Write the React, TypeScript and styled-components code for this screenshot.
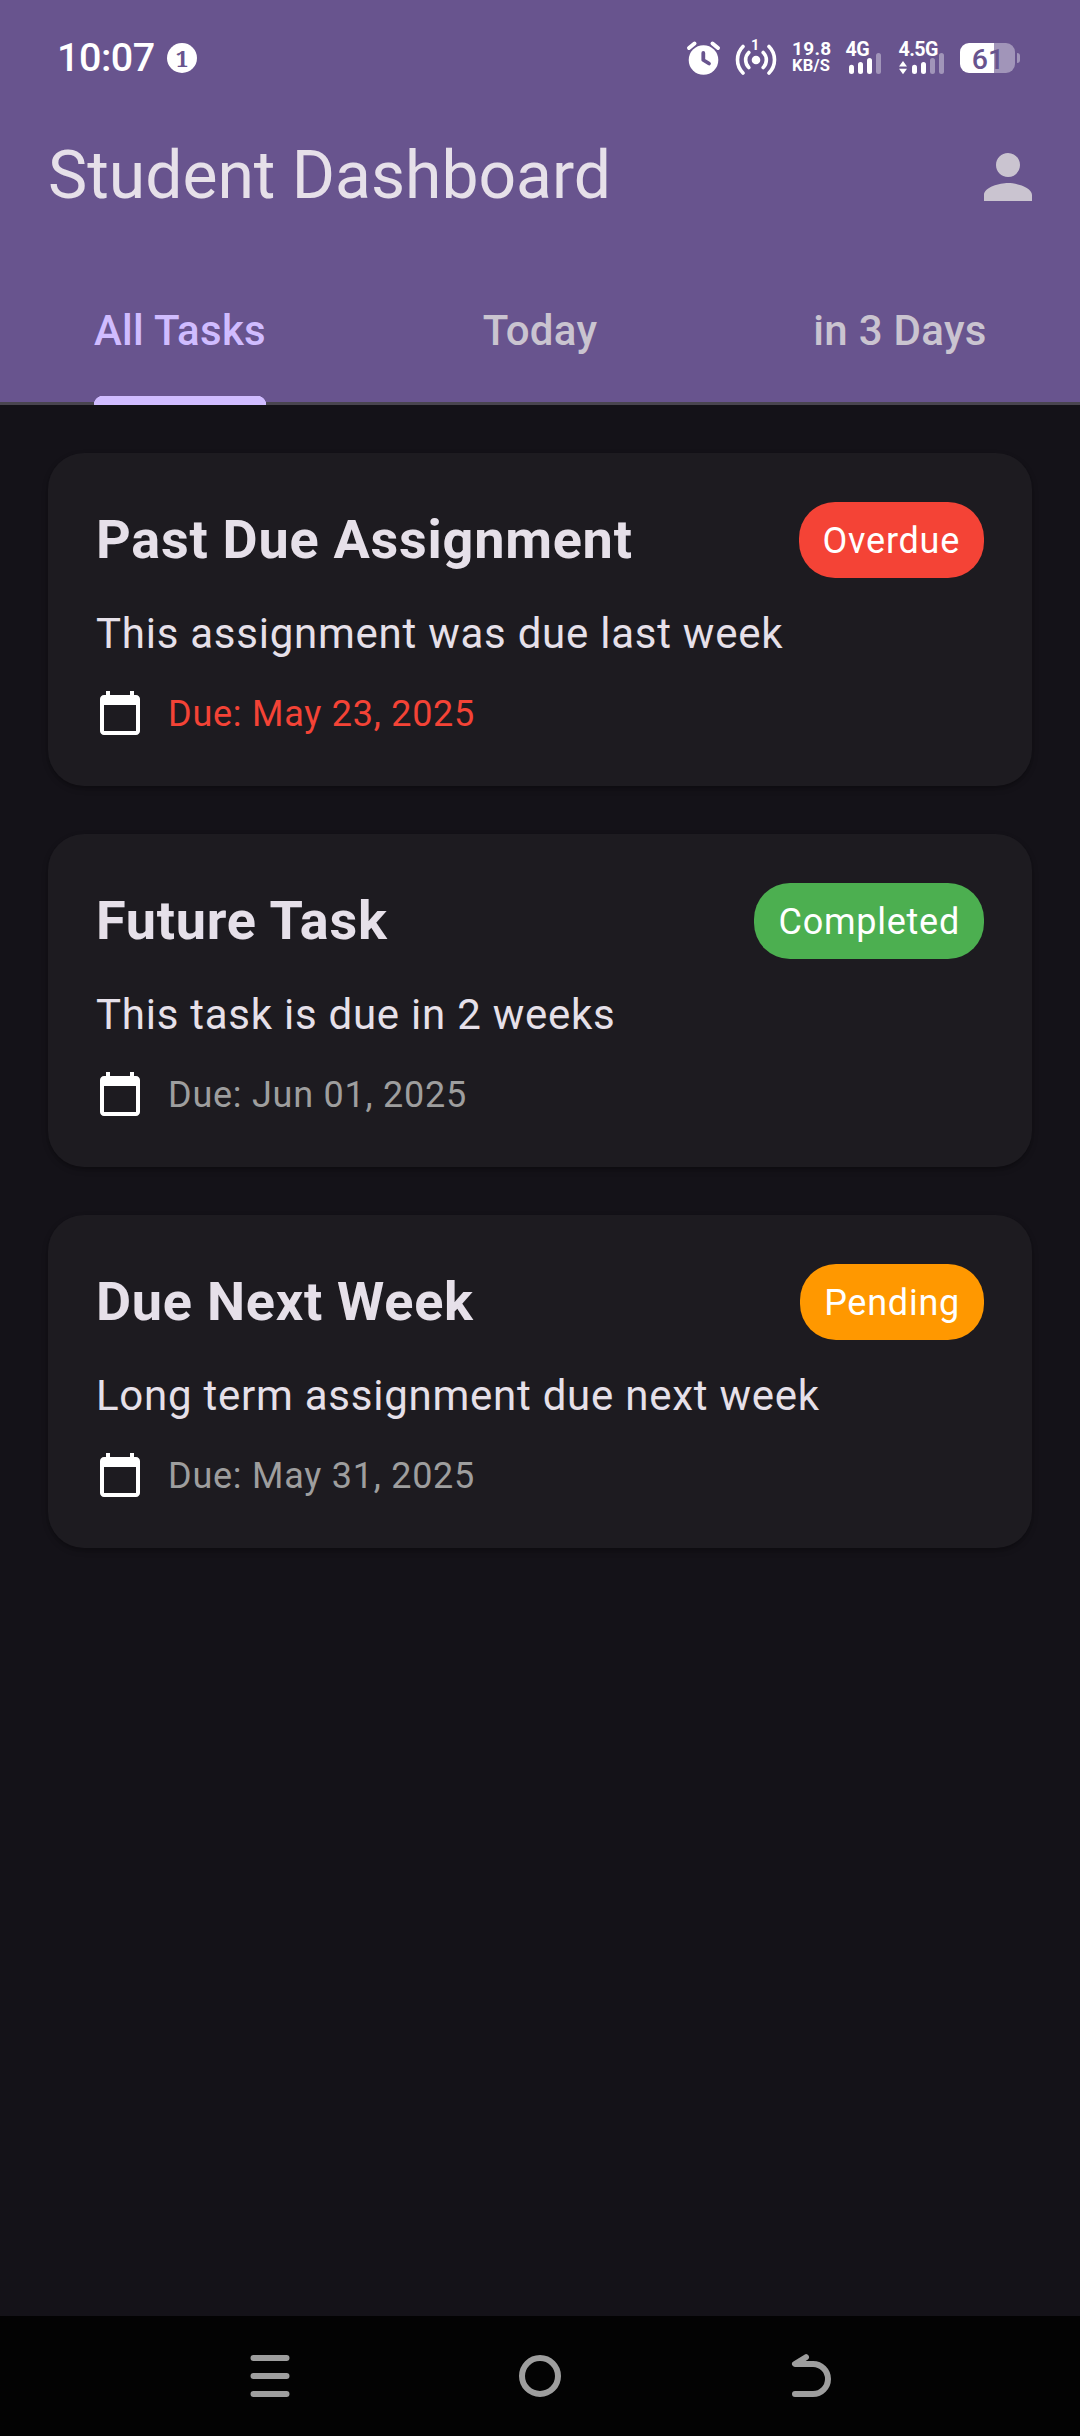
import React from "react";
import styled, { createGlobalStyle } from "styled-components";

const GlobalStyle = createGlobalStyle`
  * { box-sizing: border-box; }
  body { margin: 0; background: #141218; font-family: Roboto, "Noto Sans", sans-serif; }
`;

const Screen = styled.div`
  width: 1080px;
  height: 2436px;
  display: flex;
  flex-direction: column;
  background: #141218;
  color: #e6e0e9;
`;

const Header = styled.header`
  display: flex;
  flex-direction: column;
  height: 405px;
  background: #68548e;
`;

const StatusBar = styled.div`
  display: flex;
  align-items: flex-start;
  height: 93px;
  padding: 38px 60px 0 57px;
  color: #fff;
`;

const Clock = styled.span`
  font-size: 39.5px;
  font-weight: 500;
  letter-spacing: -0.5px;
  line-height: 40px;
  width: 110px;
`;

const NoticeCount = styled.span`
  width: 30px;
  height: 30px;
  margin-top: 5px;
  border-radius: 50%;
  background: #fff;
  color: #68548e;
  font: bold 22.5px/31px "Noto Serif", "Liberation Serif", serif;
  text-align: center;
`;

const StatusIcons = styled.div`
  display: flex;
  margin-left: auto;
  height: 38px;
`;

const StatusIcon = styled.svg<{ $gap?: number }>`
  display: block;
  flex: none;
  overflow: visible;
  margin-left: ${(p) => p.$gap ?? 0}px;
`;

const NetSpeed = styled.div`
  display: flex;
  flex-direction: column;
  width: 40px;
  margin-left: 14px;
  padding-top: 3px;
  font-weight: 700;
  white-space: nowrap;
`;

const SpeedValue = styled.span`
  font-size: 19px;
  letter-spacing: 0.3px;
  line-height: 16px;
`;

const SpeedUnit = styled.span`
  font-size: 16.5px;
  letter-spacing: 0.2px;
  line-height: 17px;
`;

const Toolbar = styled.div`
  display: flex;
  align-items: center;
  justify-content: space-between;
  height: 168px;
  padding: 0 36px 0 48px;
`;

const Title = styled.h1`
  margin: -3px 0 0;
  font-size: 66px;
  font-weight: 400;
  line-height: 84px;
`;

const IconButton = styled.button`
  display: flex;
  padding: 0;
  border: 0;
  background: none;
  color: #cac4d0;
`;

const Tabs = styled.nav`
  display: grid;
  grid-template-columns: repeat(3, 1fr);
  height: 144px;
  background: linear-gradient(to top, #49454f 3px, transparent 3px);
`;

const Tab = styled.div<{ $active: boolean }>`
  display: flex;
  justify-content: center;
  color: ${(p) => (p.$active ? "#d0bcff" : "#cac4d0")};
`;

const TabLabel = styled.span<{ $active: boolean }>`
  height: 144px;
  padding-top: 40px;
  font-size: 42px;
  font-weight: 500;
  letter-spacing: 0.3px;
  line-height: 60px;
  background: ${(p) =>
    p.$active
      ? "radial-gradient(circle at 9px 9px, #d0bcff 9px, transparent 9.5px) 0 135px / 9px 9px no-repeat, radial-gradient(circle at 0 9px, #d0bcff 9px, transparent 9.5px) 100% 135px / 9px 9px no-repeat, linear-gradient(#d0bcff, #d0bcff) 50% 135px / calc(100% - 17px) 9px no-repeat"
      : "none"};
`;

const TaskList = styled.main`
  display: flex;
  flex: 1;
  flex-direction: column;
  gap: 48px;
  padding: 48px;
`;

const Card = styled.article`
  display: flex;
  flex-direction: column;
  height: 333px;
  padding: 48px;
  border-radius: 36px;
  background: #1d1b20;
  box-shadow: 0 3px 6px rgba(0, 0, 0, 0.22), 0 2px 3px rgba(0, 0, 0, 0.1);
`;

const CardHead = styled.div`
  display: flex;
  align-items: center;
  justify-content: space-between;
  height: 77px;
`;

const TaskTitle = styled.h2`
  margin: 0;
  font-size: 54px;
  font-weight: 700;
  letter-spacing: 0.75px;
  line-height: 77px;
`;

const Badge = styled.span<{ $color: string }>`
  height: 75.5px;
  margin-top: 1px;
  padding: 13.5px 24px 0;
  border-radius: 36px;
  background: ${(p) => p.$color};
  color: #fff;
  font-size: 36px;
  letter-spacing: 0.75px;
  line-height: 51.5px;
`;

const Description = styled.p`
  margin: 26px 0 23px;
  font-size: 42px;
  letter-spacing: 0.75px;
  line-height: 60px;
`;

const DueRow = styled.div`
  display: flex;
  align-items: center;
  gap: 24px;
  height: 52px;
`;

const DueDate = styled.span<{ $late: boolean }>`
  padding-top: 2px;
  color: ${(p) => (p.$late ? "#f44336" : "#9e9e9e")};
  font-size: 36px;
  letter-spacing: 0.75px;
  line-height: 52px;
`;

const NavBar = styled.footer`
  display: flex;
  align-items: center;
  justify-content: space-between;
  height: 120px;
  padding: 0 246px;
  background: #030303;
  color: #9e9e9e;
`;

const NavIcon = styled.svg`
  display: block;
`;

const DIM = "rgba(255,255,255,0.38)";

function AlarmIcon() {
  return (
    <StatusIcon width="36" height="38" viewBox="0 0 36 38">
      <circle cx="18.5" cy="22" r="14.8" fill="#fff" />
      <path d="M4 10 L9.5 5.5 M27.5 5.5 L33 10" stroke="#fff" strokeWidth="4" strokeLinecap="round" />
      <path d="M18.3 15 V22 L24 25.5" fill="none" stroke="#68548e" strokeWidth="3.8" strokeLinecap="round" strokeLinejoin="round" />
    </StatusIcon>
  );
}

function HotspotIcon() {
  return (
    <StatusIcon $gap={13} width="44" height="38" viewBox="0 0 44 38">
      <circle cx="22" cy="22" r="4.3" fill="#fff" />
      <g fill="none" stroke="#fff" strokeWidth="3.6" strokeLinecap="round">
        <path d="M14.8 14.5 A10.5 10.5 0 0 0 14.8 29.5 M29.2 14.5 A10.5 10.5 0 0 1 29.2 29.5" />
        <path d="M9 8.5 A18.7 18.7 0 0 0 9 35 M35 8.5 A18.7 18.7 0 0 1 35 35" />
      </g>
      <text x="21.2" y="12.4" fill="#fff" fontSize="14.5" fontWeight="700" textAnchor="middle">1</text>
    </StatusIcon>
  );
}

const barTops = [26.7, 24, 20, 15];

function Signal({ label, x, width, gap, active, arrows }: { label: string; x: number; width: number; gap: number; active: number; arrows?: boolean }) {
  return (
    <StatusIcon $gap={gap} width={width} height="38" viewBox={`0 0 ${width} 38`}>
      <text x="-0.5" y="17.5" fill="#fff" fontSize="19.7" fontWeight="700" letterSpacing="-0.6">{label}</text>
      {barTops.map((top, i) => (
        <rect key={i} x={x + i * 9} y={top} width="5" height={36 - top} rx="2.5" fill={i < active ? "#fff" : DIM} />
      ))}
      {arrows && <path d="M0 28.5 L4 23 L8 28.5 Z M0 30.8 L4 36.3 L8 30.8 Z" fill="#fff" />}
    </StatusIcon>
  );
}

function BatteryIcon() {
  return (
    <StatusIcon $gap={14} width="60" height="38" viewBox="0 0 60 38">
      <path d="M34 5 H46 A9 9 0 0 1 55 14 V26 A9 9 0 0 1 46 35 H34 Z" fill={DIM} />
      <path d="M34 5 H9 A9 9 0 0 0 0 14 V26 A9 9 0 0 0 9 35 H34 Z" fill="#fff" />
      <path d="M57 15 A3 3 0 0 1 60 18 V22 A3 3 0 0 1 57 25 Z" fill={DIM} />
      <text x="28" y="31" fill="#68548e" fontSize="28.5" fontWeight="500" textAnchor="middle">61</text>
    </StatusIcon>
  );
}

function PersonIcon() {
  return (
    <svg width="72" height="72" viewBox="0 0 24 24" fill="currentColor">
      <path d="M12 12c2.21 0 4-1.79 4-4s-1.79-4-4-4-4 1.79-4 4 1.79 4 4 4zm0 2c-2.67 0-8 1.34-8 4v2h16v-2c0-2.66-5.33-4-8-4z" />
    </svg>
  );
}

function CalendarIcon() {
  return (
    <svg width="48" height="48" viewBox="0 0 24 24" fill="#fff">
      <path d="M20 3h-1V1h-2v2H7V1H5v2H4c-1.1 0-2 .9-2 2v16c0 1.1.9 2 2 2h16c1.1 0 2-.9 2-2V5c0-1.1-.9-2-2-2zm0 18H4V8h16v13z" />
    </svg>
  );
}

const tabs = ["All Tasks", "Today", "in 3 Days"];

const tasks = [
  { title: "Past Due Assignment", text: "This assignment was due last week", due: "May 23, 2025", status: "Overdue", color: "#f44336" },
  { title: "Future Task", text: "This task is due in 2 weeks", due: "Jun 01, 2025", status: "Completed", color: "#4caf50" },
  { title: "Due Next Week", text: "Long term assignment due next week", due: "May 31, 2025", status: "Pending", color: "#ff9800" },
];

export default function App() {
  return (
    <Screen>
      <GlobalStyle />
      <Header>
        <StatusBar>
          <Clock>10:07</Clock>
          <NoticeCount>1</NoticeCount>
          <StatusIcons>
            <AlarmIcon />
            <HotspotIcon />
            <NetSpeed>
              <SpeedValue>19.8</SpeedValue>
              <SpeedUnit>KB/S</SpeedUnit>
            </NetSpeed>
            <Signal label="4G" x={3} width={36} gap={14} active={3} />
            <Signal label="4.5G" x={13} width={47} gap={17} active={2} arrows />
            <BatteryIcon />
          </StatusIcons>
        </StatusBar>
        <Toolbar>
          <Title>Student Dashboard</Title>
          <IconButton aria-label="Profile"><PersonIcon /></IconButton>
        </Toolbar>
        <Tabs>
          {tabs.map((label, i) => (
            <Tab key={label} $active={i === 0}>
              <TabLabel $active={i === 0}>{label}</TabLabel>
            </Tab>
          ))}
        </Tabs>
      </Header>
      <TaskList>
        {tasks.map((task) => (
          <Card key={task.title}>
            <CardHead>
              <TaskTitle>{task.title}</TaskTitle>
              <Badge $color={task.color}>{task.status}</Badge>
            </CardHead>
            <Description>{task.text}</Description>
            <DueRow>
              <CalendarIcon />
              <DueDate $late={task.status === "Overdue"}>Due: {task.due}</DueDate>
            </DueRow>
          </Card>
        ))}
      </TaskList>
      <NavBar>
        <NavIcon width="48" height="48" viewBox="0 0 48 48" fill="none" stroke="currentColor" strokeWidth="6" strokeLinecap="round">
          <path d="M7.5 6 H40.5 M7.5 24 H40.5 M7.5 42 H40.5" />
        </NavIcon>
        <NavIcon width="48" height="48" viewBox="0 0 48 48" fill="none" stroke="currentColor" strokeWidth="6">
          <circle cx="24" cy="24" r="18" />
        </NavIcon>
        <NavIcon width="48" height="48" viewBox="0 0 48 48" fill="none" stroke="currentColor" strokeWidth="6" strokeLinecap="round" strokeLinejoin="round">
          <path d="M20 5.2 L9 12 H27 A15 15 0 0 1 27 42 H9" />
          <path d="M9 12 L20 5.2 L18.5 12 Z" fill="currentColor" stroke="none" />
        </NavIcon>
      </NavBar>
    </Screen>
  );
}
